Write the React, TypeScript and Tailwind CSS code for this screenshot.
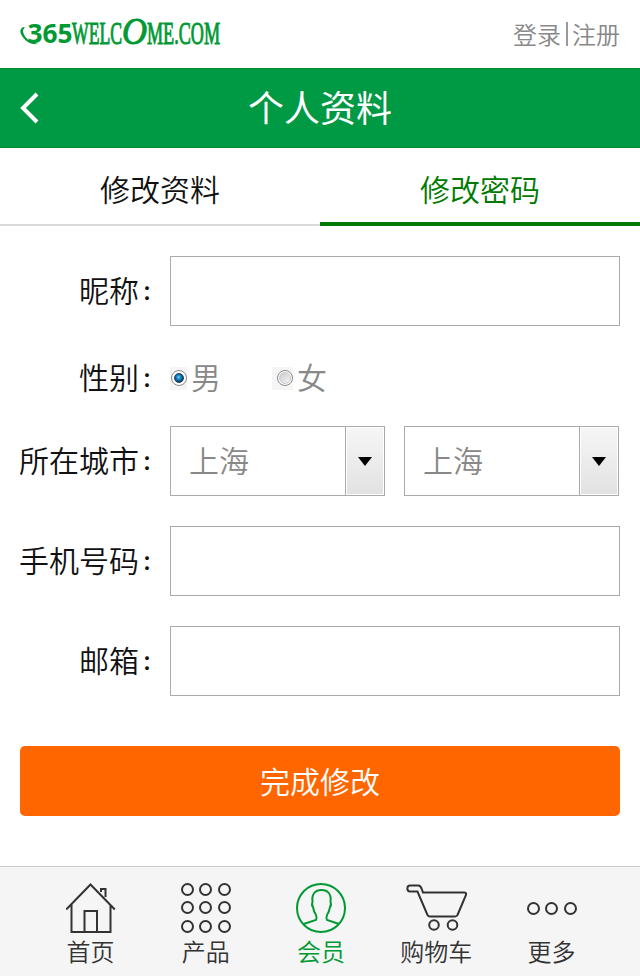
import React, { useState } from 'react';

interface NavItem {
  label: string;
  icon: React.ReactNode;
}

const Logo: React.FC = () => (
  <svg width="202" height="44" viewBox="0 -1 202 44" fill="#009933" className="block">
    <path d="M3.500 14C.5 15-.5 18 1 21c3 6.500 9 11 17.500 10C12 29.500 6.500 27 4 21.500 2.700 18.500 2.500 16.500 5 14.500z" />
    <text x="7.500" y="30" fontSize="26" fontWeight="700" textLength="45" lengthAdjust="spacingAndGlyphs" fontFamily="'Open Sans', sans-serif">365</text>
    <g fontFamily="'Liberation Serif', serif" stroke="#009933">
      <text x="52" y="30.500" fontSize="30.500" strokeWidth="1" textLength="50" lengthAdjust="spacingAndGlyphs">WELC</text>
      <text x="102" y="30.500" fontSize="38" strokeWidth="1" fontStyle="italic" textLength="25" lengthAdjust="spacingAndGlyphs">O</text>
      <text x="127" y="30.500" fontSize="30.500" strokeWidth="1" textLength="73" lengthAdjust="spacingAndGlyphs">ME.COM</text>
    </g>
  </svg>
);

const iconProps = {
  height: 50,
  fill: 'none',
  stroke: 'currentColor',
  strokeWidth: 2,
};

const HomeIcon = () => (
  <svg {...iconProps} width="50" viewBox="0.5 0 50 50">
    <path d="M.7 26.500 25 1.500l24.300 25M6 21.500V49h39V21.500M19 49V28h12.500v21M35.500 9V6H40v8" />
  </svg>
);

const GridIcon = () => (
  <svg {...iconProps} width="50" viewBox="0 0 50 50">
    {[6.5, 24.5, 43.5].map((cy) =>
      [6.5, 24.5, 43.5].map((cx) => <circle key={`${cx}-${cy}`} cx={cx} cy={cy} r="5.500" />)
    )}
  </svg>
);

const MemberIcon = () => (
  <svg {...iconProps} width="50" viewBox="0 0 50 50">
    <circle cx="25" cy="25" r="24" />
    <path d="M7.500 41 20 37c1-1.500.5-3.500 0-5-2-2.500-2.500-5-3-8-1.300-1.500-1.300-3-.5-5C15.500 11 19 7 25.500 7S35.500 11 34.500 19c.8 2 .8 3.500-.5 5-.5 3-1 5.500-3 8-.5 1.500-1 3.500 0 5L43 41" />
  </svg>
);

const CartIcon = () => (
  <svg {...iconProps} width="62" viewBox="-1 0 62 50">
    <path d="M17 9.500h41c2 0 2.500 1 2 2.500L51.500 32c-.5 1.300-1 1.500-2.500 1.500H24c-1.500 0-2-.5-2.500-1.500L11.500 8.500H4c-3.500 0-3.500-6 0-6h8.500c3 0 3 3.500 4.500 7z" />
    <circle cx="28" cy="42" r="4.800" />
    <circle cx="46.500" cy="42" r="4.800" />
  </svg>
);

const MoreIcon = () => (
  <svg {...iconProps} width="50" viewBox="-1 0 50 50" className="overflow-visible">
    {[6.5, 24.5, 43.5].map((cx) => (
      <circle key={cx} cx={cx} cy="25.500" r="5.500" />
    ))}
  </svg>
);

const navItems: NavItem[] = [
  { label: '首页', icon: <HomeIcon /> },
  { label: '产品', icon: <GridIcon /> },
  { label: '会员', icon: <MemberIcon /> },
  { label: '购物车', icon: <CartIcon /> },
  { label: '更多', icon: <MoreIcon /> },
];

const Label: React.FC<{ text: string }> = ({ text }) => (
  <label className="flex h-[35px] w-[150px] shrink-0 justify-end text-[#111]">
    {text}
    <span className="w-[30px] pt-2 pl-[3px] text-xl leading-none font-bold">：</span>
  </label>
);

const TextField: React.FC<{ label: string }> = ({ label }) => (
  <div className="flex h-[70px] items-center">
    <Label text={label} />
    <input type="text" className="ml-px h-[70px] w-[450px] border border-[#aaa] px-5 outline-none" />
  </div>
);

const Radio: React.FC<{ checked: boolean }> = ({ checked }) => (
  <span
    className={`flex h-[23px] items-center bg-[#f5f5f5] ${checked ? 'w-[17px] justify-center' : 'w-[21px] justify-end'}`}
  >
    <span className="flex size-4 items-center justify-center rounded-full border border-[#888] bg-white">
      {checked ? (
        <span className="size-2.5 rounded-full border border-[#17384f] bg-[radial-gradient(circle_at_45%_40%,#7fd4ff_0%,#148bd0_30%,#0b2c48_85%)]" />
      ) : (
        <span className="size-3 rounded-full border border-[#ccc] bg-linear-to-br from-[#c8ccd0] to-[#f4f4f4]" />
      )}
    </span>
  </span>
);

const CitySelect: React.FC<{ value: string }> = ({ value }) => (
  <div className="flex h-[70px] w-[215px] border border-[#aaa] text-[#888]">
    <span className="flex flex-1 items-center pb-[5px] pl-[18px]">{value}</span>
    <span className="flex w-[39px] border-l border-[#aaa] p-px">
      <span className="flex flex-1 items-center justify-center bg-linear-to-b from-[#f6f6f6] to-[#e2e2e2]">
        <svg width="14" height="9" viewBox="0 0 14 9" className="block">
          <path d="M0 0h14L7 9z" />
        </svg>
      </span>
    </span>
  </div>
);

const App: React.FC = () => {
  const [gender, setGender] = useState('男');

  return (
    <div className="flex h-[976px] w-[640px] flex-col bg-white font-['Noto_Sans_CJK_SC',sans-serif] text-[30px] leading-none font-[350]">
      <header className="flex h-[68px] items-center justify-between pr-5 pl-5">
        <Logo />
        <div className="flex items-center text-2xl leading-none text-[#888]">
          <span className="pb-px">登录</span>
          <span className="mr-1 ml-[5px] h-6 w-0.5 bg-[#999]" />
          <span className="pb-px">注册</span>
        </div>
      </header>

      <div className="grid h-20 grid-cols-[60px_1fr_60px] items-center border-y border-[#008a2b] bg-[#009944] text-white">
        <svg width="20" height="32" viewBox="0 0 20 32" fill="none" stroke="white" strokeWidth="4" className="ml-5">
          <path d="M17 2 3 16l14 14" />
        </svg>
        <h1 className="pb-1 text-center text-4xl leading-none font-normal">个人资料</h1>
      </div>

      <div className="grid h-[78px] grid-cols-2 text-center">
        <div className="border-b-2 border-[#d9d9d9] pt-[25px] text-[#111]">修改资料</div>
        <div className="border-b-4 border-[#007a00] pt-[25px] text-[#007a00]">修改密码</div>
      </div>

      <form className="flex flex-col pt-[30px] pl-[19px]">
        <TextField label="昵称" />
        <div className="flex h-[100px] items-center pt-1">
          <Label text="性别" />
          <div className="ml-px flex gap-[51px] text-[#888]">
            {['男', '女'].map((item) => (
              <span key={item} className="flex items-center gap-1" onClick={() => setGender(item)}>
                <Radio checked={gender === item} />
                <span className="pb-[5px]">{item}</span>
              </span>
            ))}
          </div>
        </div>
        <div className="flex h-[70px] items-center">
          <Label text="所在城市" />
          <div className="ml-px flex gap-[19px]">
            <CitySelect value="上海" />
            <CitySelect value="上海" />
          </div>
        </div>
        <div className="mt-[30px] flex flex-col gap-[30px]">
          <TextField label="手机号码" />
          <TextField label="邮箱" />
        </div>
      </form>

      <button className="mx-5 mt-[50px] h-[70px] rounded-[5px] bg-[#ff6600] pb-[3px] text-white">完成修改</button>

      <nav className="mt-auto grid h-[110px] grid-cols-5 border-t border-[#ccc] bg-[#f5f5f5] pt-4 pr-[31px] pl-[33px] text-2xl leading-none text-[#333]">
        {navItems.map((item) => (
          <div
            key={item.label}
            className={`flex flex-col items-center gap-1.5 ${item.label === '会员' ? 'text-[#009933]' : ''}`}
          >
            {item.icon}
            <span>{item.label}</span>
          </div>
        ))}
      </nav>
    </div>
  );
};

export default App;
